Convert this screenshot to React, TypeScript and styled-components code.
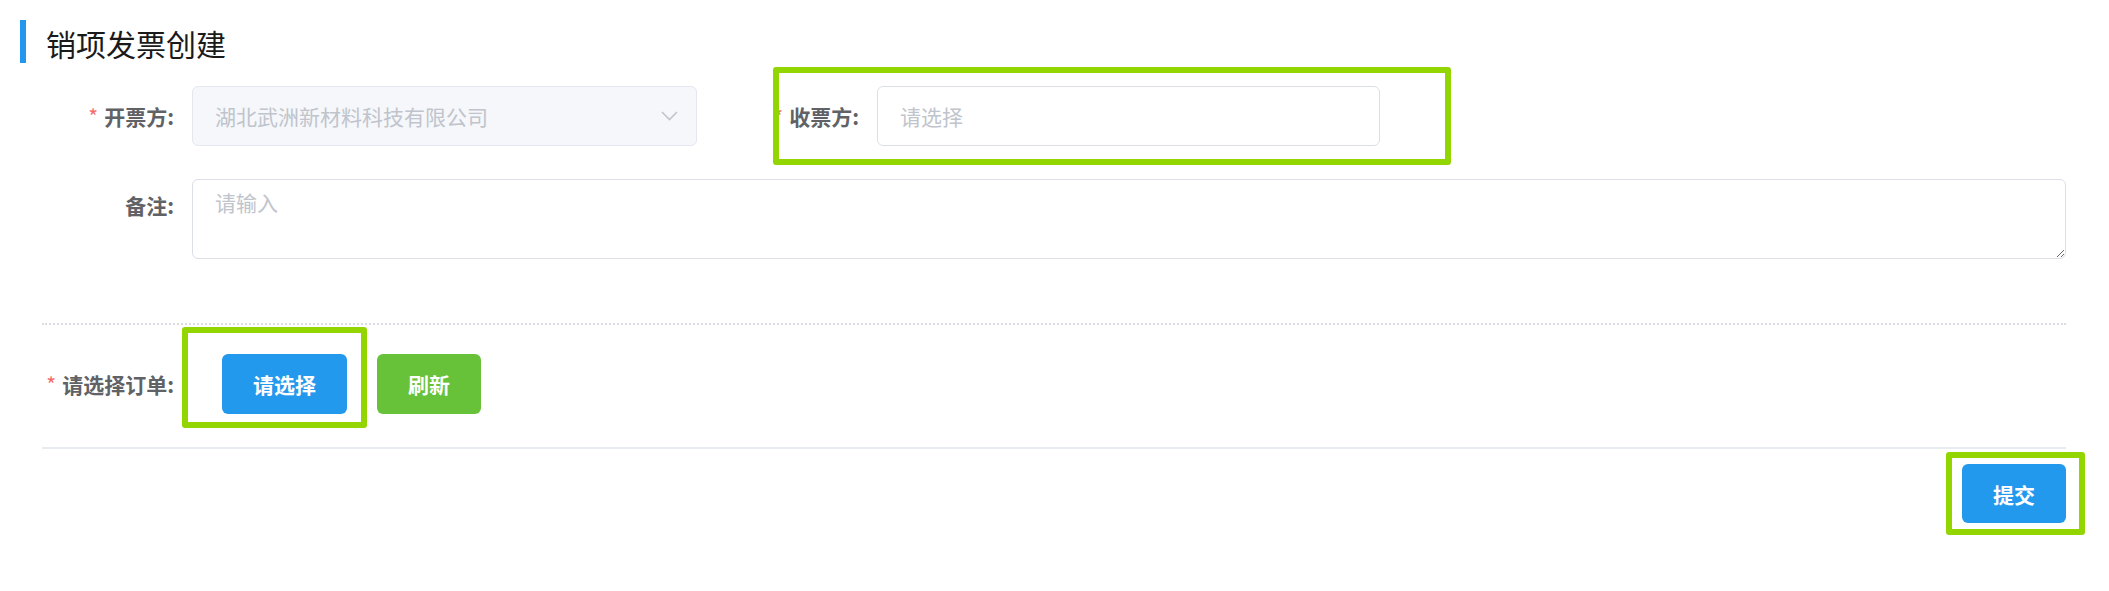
import React from "react";
import styled, { createGlobalStyle } from "styled-components";

const GlobalStyle = createGlobalStyle`
  html, body {
    margin: 0;
    padding: 0;
    background: #ffffff;
  }
  body {
    font-family: "Noto Sans CJK SC", "Noto Sans", "Liberation Sans", sans-serif;
  }
  * { box-sizing: border-box; }
`;

const Page = styled.div`
  position: relative;
  width: 2109px;
  height: 591px;
  padding: 20px 20px 0 20px;
  overflow: hidden;
`;

const TitleRow = styled.div`
  display: flex;
  align-items: center;
  gap: 20px;
  height: 43px;
`;

const TitleBar = styled.div`
  width: 6px;
  height: 43px;
  background: #2396ee;
`;

const Title = styled.h1`
  margin: 0;
  font-size: 30px;
  line-height: 43px;
  font-weight: 400;
  color: #1a1a1a;
  position: relative;
  top: 2px;
`;

const Form = styled.div`
  padding: 0 23px 0 22px;
  margin-top: 23px;
  display: flex;
  flex-direction: column;
`;

const Row = styled.div<{ $mt?: number }>`
  display: flex;
  align-items: center;
  gap: 30px;
  margin-top: ${(p) => p.$mt ?? 0}px;
`;

const FormItem = styled.div<{ $grow?: boolean; $top?: boolean }>`
  display: flex;
  align-items: ${(p) => (p.$top ? "flex-start" : "center")};
  flex: ${(p) => (p.$grow ? "1" : "0 0 auto")};
`;

const Label = styled.label<{ $top?: boolean }>`
  width: 150px;
  flex: 0 0 150px;
  padding-right: 18px;
  text-align: right;
  font-size: 21px;
  font-weight: 700;
  color: #606266;
  line-height: ${(p) => (p.$top ? "52px" : "30px")};
  white-space: nowrap;
`;

const Star = styled.span`
  color: #f56c6c;
  margin-right: 6px;
  font-weight: 400;
`;

const SelectBox = styled.div`
  width: 505px;
  height: 60px;
  display: flex;
  align-items: center;
  justify-content: space-between;
  padding: 0 18px 0 22px;
  background: #f5f7fa;
  border: 1.5px solid #e4e7ed;
  border-radius: 6px;
  font-size: 21px;
  color: #c0c4cc;
`;

const Input = styled.input`
  width: 503px;
  height: 60px;
  padding: 0 22px;
  border: 1.5px solid #dcdfe6;
  border-radius: 6px;
  font-family: inherit;
  font-size: 21px;
  color: #606266;
  outline: none;
  &::placeholder { color: #c0c4cc; }
`;

const TextArea = styled.textarea`
  flex: 1;
  height: 80px;
  padding: 7px 22px;
  border: 1.5px solid #dcdfe6;
  border-radius: 6px;
  font-family: inherit;
  font-size: 21px;
  line-height: 31px;
  color: #606266;
  outline: none;
  resize: vertical;
  &::placeholder { color: #c0c4cc; }
`;

const DottedLine = styled.div`
  margin-top: 64px;
  border-top: 2px dotted #d9dce1;
`;

const SolidLine = styled.div`
  margin-top: 33px;
  height: 2px;
  background: #e8ebf0;
`;

const Buttons = styled.div`
  display: flex;
  gap: 30px;
  margin-left: 30px;
`;

const Button = styled.button<{ $variant?: "primary" | "success" }>`
  height: 60px;
  padding: 0 31px;
  border: none;
  border-radius: 6px;
  background: ${(p) => (p.$variant === "success" ? "#67c23a" : "#2399ee")};
  color: #ffffff;
  font-family: inherit;
  font-size: 21px;
  font-weight: 700;
  line-height: 60px;
  cursor: pointer;
`;

const SubmitRow = styled.div`
  display: flex;
  justify-content: flex-end;
  margin-top: 15px;
`;

const SubmitButton = styled(Button)`
  width: 104px;
  height: 59px;
  padding: 0;
`;

const Highlight = styled.div`
  position: absolute;
  border: 6px solid #93d500;
  border-radius: 3px;
  pointer-events: none;
`;

const Chevron = () => (
  <svg width="17" height="10" viewBox="0 0 17 10">
    <polyline points="1,1 8.5,8.5 16,1" fill="none" stroke="#c0c4cc" strokeWidth="1.6" />
  </svg>
);

export default function App() {
  return (
    <>
      <GlobalStyle />
      <Page>
        <TitleRow>
          <TitleBar />
          <Title>销项发票创建</Title>
        </TitleRow>
        <Form>
          <Row>
            <FormItem>
              <Label>
                <Star>*</Star>开票方:
              </Label>
              <SelectBox>
                <span>湖北武洲新材料科技有限公司</span>
                <Chevron />
              </SelectBox>
            </FormItem>
            <FormItem>
              <Label>
                <Star>*</Star>收票方:
              </Label>
              <Input placeholder="请选择" readOnly />
            </FormItem>
          </Row>
          <Row $mt={33}>
            <FormItem $grow $top>
              <Label $top>备注:</Label>
              <TextArea placeholder="请输入" />
            </FormItem>
          </Row>
          <DottedLine />
          <Row $mt={29}>
            <FormItem>
              <Label>
                <Star>*</Star>请选择订单:
              </Label>
              <Buttons>
                <Button $variant="primary">请选择</Button>
                <Button $variant="success">刷新</Button>
              </Buttons>
            </FormItem>
          </Row>
          <SolidLine />
          <SubmitRow>
            <SubmitButton $variant="primary">提交</SubmitButton>
          </SubmitRow>
        </Form>
        <Highlight style={{ left: 773, top: 67, width: 678, height: 98 }} />
        <Highlight style={{ left: 182, top: 327, width: 185, height: 101 }} />
        <Highlight style={{ left: 1946, top: 452, width: 139, height: 83 }} />
      </Page>
    </>
  );
}
